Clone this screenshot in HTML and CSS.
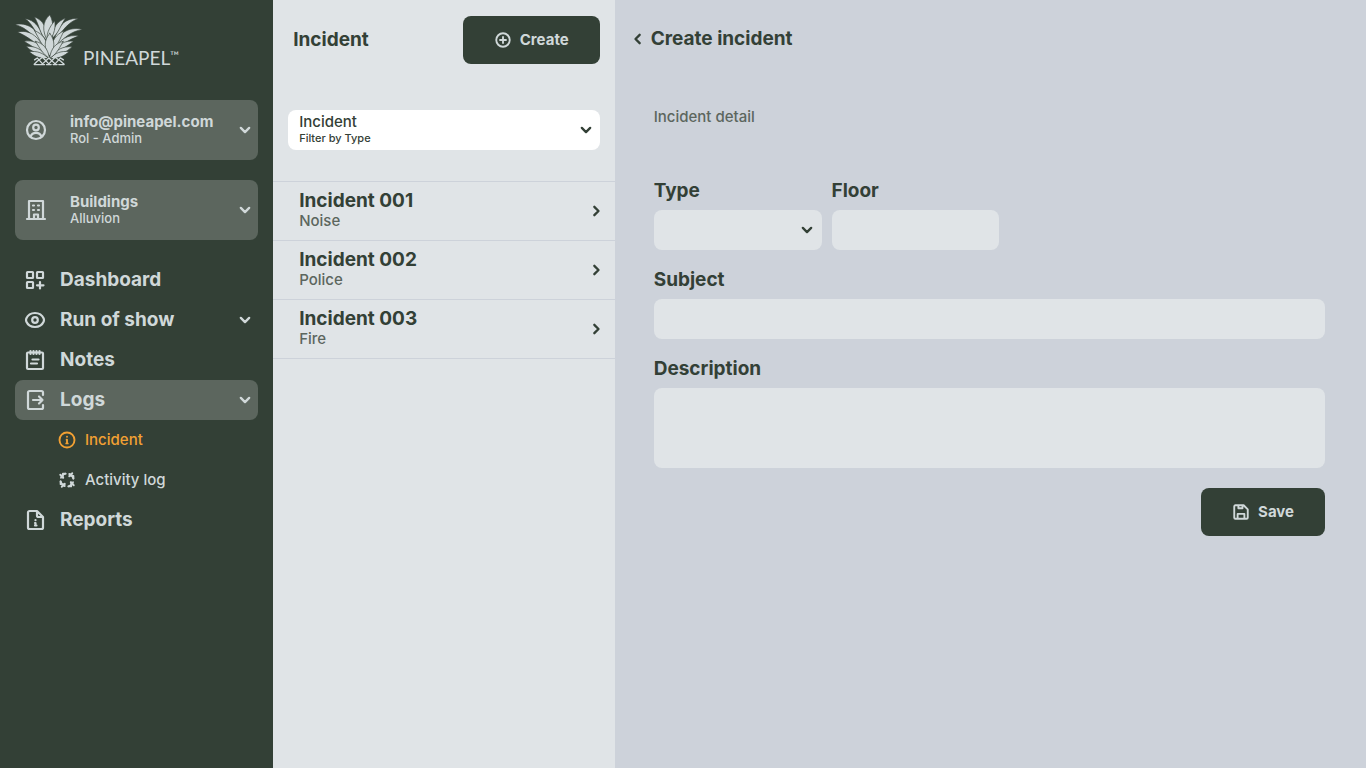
FILE: index.html
```
<!DOCTYPE html>
<html lang="en">
<head>
  <meta charset="utf-8">
  <meta name="viewport" content="width=device-width, initial-scale=1">
  <title>Create incident - Pineapel</title>
  <link rel="stylesheet" href="styles.css">
</head>
<body>
<svg class="sprite" aria-hidden="true">
  <symbol id="down" viewBox="0 0 24 24"><path d="M7 9.500 12 14.500l5-5"/></symbol>
  <symbol id="right" viewBox="0 0 24 24"><path d="M10 7l5 5-5 5"/></symbol>
  <symbol id="left" viewBox="0 0 24 24"><path d="M14 7l-5 5 5 5"/></symbol>
</svg>
<div class="app">
  <aside class="sidebar">
    <a href="#" class="logo" aria-label="Pineapel">
      <svg class="logo-mark" viewBox="45 42 205 156">
        <g class="leaves">
          <path d="M45 73C80 66 112 84 128 128L132 150C108 114 84 84 45 73Z"/>
          <path d="M249 88C217 80 184 90 164 130L164 150C188 114 213 94 249 88Z"/>
          <path d="M52 96C86 88 114 104 136 152C107 130 84 109 52 96Z"/>
          <path d="M237 108C205 102 180 116 160 154C187 134 208 118 237 108Z"/>
          <path d="M72 124C100 118 121 130 140 162C113 151 93 136 72 124Z"/>
          <path d="M222 124C196 120 175 132 156 162C182 153 202 138 222 124Z"/>
          <path d="M78 139C107 138 124 147 142 170C116 165 93 154 78 139Z"/>
          <path d="M217 140C188 139 172 148 154 170C180 166 202 156 217 140Z"/>
          <path d="M88 155C112 152 130 159 146 176C120 177 100 168 88 155Z"/>
          <path d="M208 155C184 152 166 159 150 176C176 177 195 168 208 155Z"/>
          <path d="M75 55C105 60 124 82 136 134C112 114 104 76 75 55Z"/>
          <path d="M237 55C201 53 176 70 162 124C186 98 202 66 237 55Z"/>
          <path d="M103 50C130 60 143 83 141 122C120 105 119 75 103 50Z"/>
          <path d="M198 54C173 63 158 82 157 115C176 101 183 74 198 54Z"/>
          <path d="M150 44C125 66 128 94 143 124C162 102 164 70 150 44Z"/>
          <path d="M165 62C169 92 158 110 144 132C136 107 147 82 165 62Z"/>
          <path d="M104 92C130 102 142 119 146 156C126 138 117 115 104 92Z"/>
          <path d="M193 92C168 104 156 120 152 156C174 140 180 116 193 92Z"/>
          <path d="M150 100C130 122 133 148 149 168C166 148 167 122 150 100Z"/>
          <path d="M107 124C130 130 144 145 149 175C130 164 119 144 107 124Z"/>
          <path d="M190 124C167 130 154 145 149 175C170 164 179 144 190 124Z"/>
        </g>
        <path class="fruit" d="M104 180l8-6 16 18 19-18 19 18 16-18 9 6M103 193l9-9 16-12 19 20 19-20 17 12 10 9M103 194h16M122 194h12M140 194h14M160 194h12M177 194h16"/>
      </svg>
      <span class="logo-text">PINEAPEL<span class="tm">™</span></span>
    </a>

    <button type="button" class="card">
      <svg class="icon" viewBox="0 0 24 24"><circle cx="12" cy="12" r="9"/><circle cx="12" cy="9.500" r="2.800"/><path d="M6.500 18.500c1-2.500 3-3.700 5.500-3.700s4.500 1.200 5.500 3.700"/></svg>
      <span class="card-text"><strong>info@pineapel.com</strong><span>Rol - Admin</span></span>
      <svg class="icon-sm"><use href="#down"/></svg>
    </button>
    <button type="button" class="card">
      <svg class="icon" viewBox="0 0 24 24"><path d="M3 21h18M5 21V3h14v18M10 21v-4.500h4V21"/><path d="M9 7.500h1M14 7.500h1M9 12h1M14 12h1"/></svg>
      <span class="card-text"><strong>Buildings</strong><span>Alluvion</span></span>
      <svg class="icon-sm"><use href="#down"/></svg>
    </button>

    <nav class="nav">
      <a href="#">
        <svg class="icon" viewBox="0 0 24 24"><rect x="4" y="4" width="6" height="6" rx=".5"/><rect x="14" y="4" width="6" height="6" rx=".5"/><rect x="4" y="14" width="6" height="6" rx=".5"/><path d="M17 14v6.500M14 17.300h6.500"/></svg>
        <span>Dashboard</span>
      </a>
      <a href="#">
        <svg class="icon" viewBox="0 0 24 24"><path d="M12 5c4.500 0 7.500 2.800 8.700 5.500.4 1 .4 2 0 3-1.200 2.700-4.200 5.500-8.700 5.500s-7.500-2.800-8.700-5.500c-.4-1-.4-2 0-3C4.500 7.800 7.500 5 12 5Z"/><circle cx="12" cy="12" r="2.800"/></svg>
        <span>Run of show</span>
        <svg class="icon-sm"><use href="#down"/></svg>
      </a>
      <a href="#">
        <svg class="icon" viewBox="0 0 24 24"><rect x="4" y="4.500" width="16" height="16.500" rx="1"/><path d="M7.500 3v3M10.500 3v3M13.500 3v3M16.500 3v3M9.500 11.500h6M8 15.500h6"/></svg>
        <span>Notes</span>
      </a>
      <a href="#" class="active">
        <svg class="icon" viewBox="0 0 24 24"><path d="M20 7V4.500A1.500 1.500 0 0 0 18.500 3h-12A1.500 1.500 0 0 0 5 4.500v15A1.500 1.500 0 0 0 6.500 21h12a1.500 1.500 0 0 0 1.500-1.500V17M10 12h9.500M16 8.500l3.500 3.500-3.500 3.500"/></svg>
        <span>Logs</span>
        <svg class="icon-sm"><use href="#down"/></svg>
      </a>
      <a href="#" class="sub current">
        <svg class="icon-sub" viewBox="0 0 24 24"><circle cx="12" cy="12" r="10"/><path d="M12 7.500v.2M11.500 11.500h.5v4.500M11 16.500h2"/></svg>
        <span>Incident</span>
      </a>
      <a href="#" class="sub">
        <svg class="icon-sub" viewBox="0 0 24 24"><path d="M10 3.500H6.500V9M3 5l4 4M20.500 10V6.500H15M19 3l-4 4M14 20.500h3.500V15M21 19l-4-4M3.500 14v3.500H9M5 21l4-4"/><path d="M4 9C5 6 7 4 10 3.500M15 4c3 1 5 3 5.500 6M20 15c-1 3-3 5-6 5.500M9 20c-3-1-5-3-5.500-6"/></svg>
        <span>Activity log</span>
      </a>
      <a href="#">
        <svg class="icon" viewBox="0 0 24 24"><path d="M14 3H6.500A1.500 1.500 0 0 0 5 4.500v15A1.500 1.500 0 0 0 6.500 21h12a1.500 1.500 0 0 0 1.500-1.500V9ZM14 3v4.500A1.500 1.500 0 0 0 15.500 9H20M12.500 12v.2M12 15h.5v2.500M12 17.500h1.500"/></svg>
        <span>Reports</span>
      </a>
    </nav>
  </aside>

  <section class="list-panel">
    <header class="list-header">
      <h2>Incident</h2>
      <button type="button" class="btn">
        <svg class="icon-btn" viewBox="0 0 24 24"><circle cx="12" cy="12" r="9"/><path d="M12 8v8M8 12h8"/></svg>
        Create
      </button>
    </header>
    <div class="filter">
      <select id="filter-type">
        <option>Incident</option>
        <option>Activity log</option>
      </select>
      <label for="filter-type">Filter by Type</label>
      <svg class="icon-sm"><use href="#down"/></svg>
    </div>
    <ul class="incidents">
      <li><a href="#"><span class="item"><strong>Incident 001</strong><span>Noise</span></span><svg class="icon-sm"><use href="#right"/></svg></a></li>
      <li><a href="#"><span class="item"><strong>Incident 002</strong><span>Police</span></span><svg class="icon-sm"><use href="#right"/></svg></a></li>
      <li><a href="#"><span class="item"><strong>Incident 003</strong><span>Fire</span></span><svg class="icon-sm"><use href="#right"/></svg></a></li>
    </ul>
  </section>

  <main class="detail">
    <header class="detail-header">
      <a href="#" aria-label="Back"><svg class="icon-sm"><use href="#left"/></svg></a>
      <h1>Create incident</h1>
    </header>
    <p class="caption">Incident detail</p>
    <form class="form">
      <div class="row">
        <div class="field">
          <label for="type">Type</label>
          <div class="select">
            <select id="type"><option></option><option>Noise</option><option>Police</option><option>Fire</option></select>
            <svg class="icon-sm"><use href="#down"/></svg>
          </div>
        </div>
        <div class="field">
          <label for="floor">Floor</label>
          <input type="text" id="floor">
        </div>
      </div>
      <div class="field">
        <label for="subject">Subject</label>
        <input type="text" id="subject">
      </div>
      <div class="field">
        <label for="description">Description</label>
        <textarea id="description"></textarea>
      </div>
      <button type="submit" class="btn save">
        <svg class="icon-btn" viewBox="0 0 24 24"><path d="M15.500 3h-11A1.500 1.500 0 0 0 3 4.500v15A1.500 1.500 0 0 0 4.500 21h15a1.500 1.500 0 0 0 1.500-1.500v-11ZM8.500 3v4h5.500V3M7.500 21v-6.500h9V21"/></svg>
        Save
      </button>
    </form>
  </main>
</div>
</body>
</html>
```
FILE: styles.css
```
* {
  box-sizing: border-box;
}

body {
  margin: 0;
  --dark: #334036;
  --card: #5c665e;
  --light: #d0d8d9;
  --panel: #e0e4e7;
  --bg: #cdd2da;
  --accent: #f2a033;
  font-family: Inter, "Liberation Sans", sans-serif;
  font-size: 15px;
  line-height: 20px;
  font-weight: 500;
  color: var(--dark);
}

a {
  color: inherit;
  text-decoration: none;
}

button,
input,
select,
textarea {
  font: inherit;
  color: inherit;
  border: none;
  border-radius: 8px;
}

button {
  cursor: pointer;
}

svg {
  fill: none;
  stroke: currentColor;
  stroke-width: 2.2;
  stroke-linecap: round;
  stroke-linejoin: round;
  flex-shrink: 0;
}

.sprite {
  display: none;
}

.icon {
  width: 24px;
  height: 24px;
}

.icon-sm {
  width: 20px;
  height: 20px;
  stroke-width: 2.8;
}

.icon-sub,
.icon-btn {
  width: 18px;
  height: 18px;
  stroke-width: 2.5;
}

h1,
h2 {
  margin: 0;
  font-size: 19px;
  line-height: 24px;
  font-weight: 700;
}

.app {
  display: grid;
  grid-template-columns: 20fr 25fr 55fr;
  min-height: 100vh;
}

/* Sidebar */
.sidebar {
  padding: 14px 15px;
  background-color: var(--dark);
  color: var(--light);
}

.logo {
  display: flex;
  align-items: flex-end;
  height: 86px;
  padding-bottom: 34px;
}

.logo-mark {
  width: 68px;
  height: 52px;
}

.leaves {
  fill: var(--light);
  stroke: var(--dark);
  stroke-width: 2;
}

.fruit {
  stroke-width: 4;
}

.logo-text {
  display: flex;
  align-items: flex-start;
  font-family: Lato, sans-serif;
  font-size: 19px;
  line-height: 16px;
  font-weight: 400;
}

.tm {
  font-size: 12px;
  line-height: 12px;
}

.card {
  display: flex;
  align-items: center;
  width: 100%;
  height: 60px;
  margin-bottom: 20px;
  padding: 0 3px 0 9px;
  background-color: var(--card);
  text-align: left;
}

.card-text {
  display: flex;
  flex-direction: column;
  flex: 1;
  margin-left: 22px;
  font-size: 13px;
  line-height: 16px;
}

.card-text strong {
  font-size: 15px;
}

.nav a {
  display: flex;
  align-items: center;
  gap: 13px;
  height: 40px;
  padding: 0 3px 0 8px;
  border-radius: 8px;
  font-size: 19px;
  font-weight: 700;
}

.nav a span {
  flex: 1;
}

.nav .active {
  background-color: var(--card);
}

.nav .sub {
  gap: 9px;
  padding-left: 43px;
  font-size: 15px;
  font-weight: 500;
}

.nav .current {
  color: var(--accent);
}

.btn {
  display: flex;
  align-items: center;
  justify-content: center;
  gap: 8px;
  height: 48px;
  padding: 0 31px;
  background-color: var(--dark);
  color: var(--light);
  font-weight: 700;
}

/* Incident list */
.list-panel {
  background-color: var(--panel);
}

.list-header {
  display: flex;
  align-items: center;
  justify-content: space-between;
  padding: 16px 15px 0 20px;
}

.filter {
  display: grid;
  grid-template-columns: 1fr 20px;
  grid-template-rows: 22px 12px 6px;
  margin: 46px 15px 31px;
  padding: 0 4px 0 11px;
  border-radius: 8px;
  background-color: white;
}

.filter select {
  appearance: none;
  grid-area: 1 / 1;
  align-self: end;
  padding: 0;
  background-color: transparent;
}

.filter label {
  grid-area: 2 / 1;
  font-size: 11px;
  line-height: 12px;
}

.filter svg {
  grid-area: 1 / 2 / 4 / 3;
  align-self: center;
}

.incidents {
  margin: 0;
  padding: 0;
  list-style: none;
  border-top: 1px solid var(--bg);
}

.incidents a {
  display: flex;
  align-items: center;
  justify-content: space-between;
  height: 59px;
  padding: 0 9px 0 26px;
  border-bottom: 1px solid var(--bg);
}

.item {
  display: flex;
  flex-direction: column;
  color: var(--card);
}

.item strong {
  color: var(--dark);
  font-size: 19px;
}

/* Detail */
.detail {
  background-color: var(--bg);
}

.detail-header {
  display: flex;
  align-items: center;
  gap: 3px;
  height: 78px;
  padding-left: 13px;
}

.detail-header a {
  display: flex;
}

.caption {
  margin: 29px 39px 54px;
  color: var(--card);
}

.form {
  display: flex;
  flex-direction: column;
  gap: 20px;
  padding: 0 41px 20px 39px;
}

.row {
  display: flex;
  gap: 10px;
}

.row .field {
  width: 25%;
}

.field {
  display: flex;
  flex-direction: column;
  gap: 9px;
}

.field label {
  font-size: 19px;
  font-weight: 700;
}

.field input,
.field select,
.field textarea {
  width: 100%;
  height: 40px;
  padding: 0 12px;
  background-color: var(--panel);
}

.field textarea {
  height: 80px;
  padding: 10px 12px;
  resize: none;
}

.select {
  display: grid;
  align-items: center;
}

.select select {
  appearance: none;
  grid-area: 1 / 1;
}

.select svg {
  grid-area: 1 / 1;
  justify-self: end;
  margin-right: 5px;
  pointer-events: none;
}

.save {
  align-self: flex-end;
}
```
